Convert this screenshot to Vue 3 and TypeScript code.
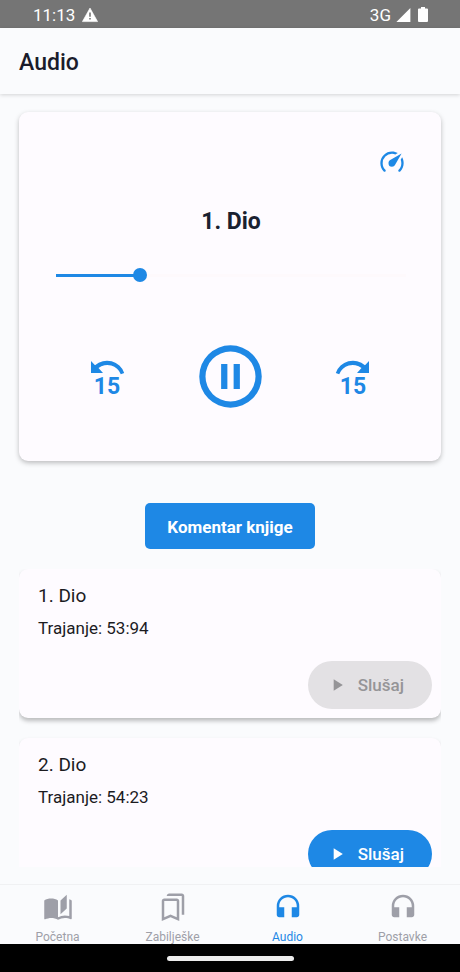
<script setup lang="ts">
import { computed, ref } from 'vue'

interface Track {
  id: number
  title: string
  duration: string
}

interface Tab {
  label: string
  viewBox: string
  path: string
}

const tracks: Track[] = [
  { id: 1, title: '1. Dio', duration: '53:94' },
  { id: 2, title: '2. Dio', duration: '54:23' },
]

const headphones =
  'M12 3a9 9 0 0 0-9 9v7c0 1.1.9 2 2 2h4v-8H5v-1c0-3.87 3.13-7 7-7s7 3.13 7 7v1h-4v8h4c1.1 0 2-.9 2-2v-7a9 9 0 0 0-9-9z'

const tabs: Tab[] = [
  {
    label: 'Početna',
    viewBox: '0 -1 24 24',
    path: 'M19,2L14,6.5V17.5L19,13V2M6.5,5C4.55,5 2.45,5.4 1,6.5V21.16C1,21.41 1.25,21.66 1.5,21.66C1.6,21.66 1.65,21.59 1.75,21.59C3.1,20.94 5.05,20.5 6.5,20.5C8.45,20.5 10.55,20.9 12,22C13.35,21.15 15.8,20.5 17.5,20.5C19.15,20.5 20.85,20.81 22.25,21.56C22.35,21.61 22.4,21.59 22.5,21.59C22.75,21.59 23,21.34 23,21.09V6.5C22.4,6.05 21.75,5.75 21,5.5V19C19.9,18.65 18.7,18.5 17.5,18.5C15.8,18.5 13.35,19.15 12,20V6.5C10.55,5.4 8.45,5 6.5,5Z',
  },
  {
    label: 'Zabilješke',
    viewBox: '0 -1 24 24',
    path: 'M15 7v12.97l-5-2.15-5 2.15V7h10m4-6H9C7.9 1 7 1.9 7 3h12v15h2V3c0-1.1-.9-2-2-2zm-4 4H5c-1.1 0-2 .9-2 2v16l7-3 7 3V7c0-1.1-.9-2-2-2z',
  },
  { label: 'Audio', viewBox: '0 0 24 24', path: headphones },
  { label: 'Postavke', viewBox: '0 0 24 24', path: headphones },
]

const activeTab = ref('Audio')
const activeTrack = ref(1)
const position = ref(23)

const current = computed(() => tracks.find((t) => t.id === activeTrack.value) ?? tracks[0])

function seek(delta: number) {
  position.value = Math.min(100, Math.max(0, position.value + delta))
}

function play(id: number) {
  activeTrack.value = id
  position.value = 0
}
</script>

<template>
  <div class="screen">
    <div class="status">
      <span class="group">
        <span>11:13</span>
        <svg width="16" height="16" viewBox="0 0 16 16">
          <path d="M8 1 15.6 14.6H.4z" fill="#fff" stroke="#fff" stroke-width=".6" stroke-linejoin="round" />
          <path d="M7.2 5.6h1.6v4.2H7.2zM7.2 11h1.6v1.6H7.2z" fill="#757575" />
        </svg>
      </span>
      <span class="group network">
        <span>3G</span>
        <svg width="15" height="16" viewBox="0 0 15 16"><path d="M14.4 1v14H.4z" fill="#fff" /></svg>
        <svg class="battery" width="10" height="16" viewBox="0 0 10 16">
          <path d="M3 0h4v1.6h2q1 0 1 1V14q0 1-1 1H1q-1 0-1-1V2.600q0-1 1-1h2z" fill="#fff" />
        </svg>
      </span>
    </div>

    <header class="header"><h1>Audio</h1></header>

    <main class="content">
      <section class="player">
        <button class="icon-button speed" type="button" aria-label="Brzina">
          <svg width="28" height="28" viewBox="0 0 24 24" fill="currentColor">
            <path
              d="M12,16A3,3 0 0,1 9,13C9,11.88 9.61,10.9 10.5,10.39L20.21,4.77L14.68,14.35C14.18,15.33 13.17,16 12,16M12,3C13.81,3 15.5,3.5 16.97,4.32L14.87,5.53C14,5.19 13,5 12,5A8,8 0 0,0 4,13C4,15.21 4.89,17.21 6.34,18.65H6.35C6.74,19.04 6.74,19.67 6.35,20.06C5.96,20.45 5.32,20.45 4.93,20.07C3.12,18.26 2,15.76 2,13A10,10 0 0,1 12,3M22,13C22,15.76 20.88,18.26 19.07,20.07C18.68,20.45 18.05,20.45 17.66,20.06C17.27,19.67 17.27,19.04 17.66,18.65C19.11,17.2 20,15.21 20,13C20,12 19.81,11 19.46,10.1L20.67,8C21.5,9.5 22,11.18 22,13Z"
            />
          </svg>
        </button>
        <h2>{{ current.title }}</h2>
        <input
          v-model.number="position"
          class="slider"
          type="range"
          min="0"
          max="100"
          aria-label="Pozicija"
          :style="{ '--played': position + '%' }"
        />
        <div class="controls">
          <button class="icon-button" type="button" aria-label="Natrag 15 sekundi" @click="seek(-15)">
            <svg width="36" height="52" viewBox="0 -8 36 52" fill="currentColor">
              <path d="M1 2V14H13L8.500 9A14.500 14.500 0 0 1 30.800 15.300L34.200 13.900A18.200 18.200 0 0 0 5 6.200z" />
              <text x="17" y="35" text-anchor="middle">15</text>
            </svg>
          </button>
          <button class="icon-button" type="button" aria-label="Pauza">
            <svg width="75" height="75" viewBox="0 0 24 24" fill="currentColor">
              <path
                d="M13,16V8H15V16H13M9,16V8H11V16H9M12,2A10,10 0 0,1 22,12A10,10 0 0,1 12,22A10,10 0 0,1 2,12A10,10 0 0,1 12,2M12,4A8,8 0 0,0 4,12A8,8 0 0,0 12,20A8,8 0 0,0 20,12A8,8 0 0,0 12,4Z"
              />
            </svg>
          </button>
          <button class="icon-button" type="button" aria-label="Naprijed 15 sekundi" @click="seek(15)">
            <svg width="36" height="52" viewBox="0 -8 36 52" fill="currentColor">
              <path d="M35 2V14H23L27.500 9A14.500 14.500 0 0 0 5.200 15.300L1.800 13.900A18.200 18.200 0 0 1 31 6.200z" />
              <text x="19" y="35" text-anchor="middle">15</text>
            </svg>
          </button>
        </div>
      </section>

      <button class="comment" type="button">Komentar knjige</button>

      <ul class="tracks">
        <li v-for="track in tracks" :key="track.id" class="track">
          <h3>{{ track.title }}</h3>
          <p>Trajanje: {{ track.duration }}</p>
          <button class="listen" type="button" :disabled="track.id === activeTrack" @click="play(track.id)">
            <svg width="20" height="20" viewBox="0 0 24 24" fill="currentColor"><path d="M8 5v14l11-7z" /></svg>
            <span>Slušaj</span>
          </button>
        </li>
      </ul>
    </main>

    <nav class="tabs">
      <button
        v-for="tab in tabs"
        :key="tab.label"
        type="button"
        class="tab"
        :class="{ active: tab.label === activeTab }"
        @click="activeTab = tab.label"
      >
        <svg width="30" height="30" :viewBox="tab.viewBox" fill="currentColor"><path :d="tab.path" /></svg>
        <span>{{ tab.label }}</span>
      </button>
    </nav>

    <div class="gesture"><span class="pill"></span></div>
  </div>
</template>

<style>
body {
  background: #fafbfd;
}
</style>

<style scoped>
.screen {
  display: flex;
  flex-direction: column;
  height: 100vh;
  background: #fafbfd;
  color: #1c1b1f;
  font-family: Roboto, 'Liberation Sans', sans-serif;
}

button {
  padding: 0;
  border: 0;
  background: none;
  color: inherit;
  font: inherit;
  cursor: pointer;
}

svg {
  display: block;
  flex: none;
}

h1,
h2,
h3,
p,
ul {
  margin: 0;
  padding: 0;
}

.status {
  display: flex;
  flex: none;
  align-items: center;
  justify-content: space-between;
  height: 28px;
  padding: 2px 32px 0 33px;
  box-sizing: border-box;
  background: #757575;
  color: #fff;
  font-size: 17px;
  line-height: 20px;
}

.group {
  display: flex;
  align-items: center;
  gap: 7px;
}

.network {
  gap: 5px;
}

.battery {
  margin-left: 2px;
}

.header {
  position: relative;
  flex: none;
  padding: 20px 19px 16px;
  background: #fafbfd;
  box-shadow: 0 1px 4px rgba(0, 0, 0, 0.16);
}

h1 {
  font-size: 23px;
  font-weight: 500;
  line-height: 30px;
  color: #1a1c2b;
}

.content {
  display: flex;
  flex: 1;
  flex-direction: column;
  min-height: 0;
  padding: 18px 19px 17px;
}

.player {
  display: flex;
  flex: none;
  flex-direction: column;
  padding: 36px 35px 47px 37px;
  border-radius: 9px;
  background: #fefbff;
  box-shadow: 0 2px 5px rgba(0, 0, 0, 0.25);
}

.icon-button {
  color: #1e88e5;
}

.icon-button text {
  font-size: 23px;
  font-weight: 700;
}

.speed {
  align-self: flex-end;
}

h2 {
  margin-top: 31px;
  font-size: 23px;
  font-weight: 700;
  line-height: 30px;
  text-align: center;
  color: #1a2130;
}

.slider {
  width: 100%;
  height: 24px;
  margin: 26px 0 0;
  appearance: none;
  background: linear-gradient(#1e88e5, #1e88e5) 0 50% / var(--played) 3px no-repeat,
    linear-gradient(#fef9fc, #fef9fc) 0 50% / 100% 3px no-repeat;
}

.slider::-webkit-slider-thumb {
  width: 14px;
  height: 14px;
  appearance: none;
  border-radius: 50%;
  background: #1e88e5;
}

.controls {
  display: flex;
  align-items: center;
  justify-content: space-between;
  margin-top: 52px;
  padding: 0 36px 0 34px;
}

.comment {
  flex: none;
  align-self: center;
  margin: 42px 0 20px;
  padding: 12px 22px 10px;
  border-radius: 5px;
  background: #1e88e5;
  color: #fff;
  font-size: 17px;
  font-weight: 700;
  line-height: 24px;
}

.tracks {
  display: flex;
  flex: 1;
  flex-direction: column;
  gap: 20px;
  min-height: 0;
  overflow: hidden;
  list-style: none;
}

.track {
  display: flex;
  flex: none;
  flex-direction: column;
  padding: 14px 9px 9px 19px;
  border-radius: 9px;
  background: #fefbff;
  box-shadow: 0 3px 4px rgba(0, 0, 0, 0.25);
}

h3 {
  font-size: 19px;
  font-weight: 400;
  line-height: 26px;
}

p {
  margin-top: 7px;
  font-size: 17px;
  line-height: 24px;
}

.listen {
  display: flex;
  align-items: center;
  align-self: flex-end;
  gap: 11px;
  height: 48px;
  margin-top: 21px;
  padding: 0 28px 0 19px;
  border-radius: 24px;
  background: #1e88e5;
  color: #fff;
  font-size: 17px;
  font-weight: 500;
}

.listen:disabled {
  background: #e3e1e4;
  color: #959497;
  cursor: default;
}

.tabs {
  display: flex;
  flex: none;
  border-top: 1px solid #f0f1f3;
}

.tab {
  display: flex;
  flex: 1;
  flex-direction: column;
  align-items: center;
  gap: 9px;
  padding-top: 6px;
  color: #9e9fa8;
  font-size: 12px;
  line-height: 14px;
}

.tab.active {
  color: #1e88e5;
}

.gesture {
  display: flex;
  flex: none;
  align-items: center;
  justify-content: center;
  height: 28px;
  background: #000;
}

.pill {
  width: 127px;
  height: 5px;
  border-radius: 3px;
  background: #ececec;
}
</style>
